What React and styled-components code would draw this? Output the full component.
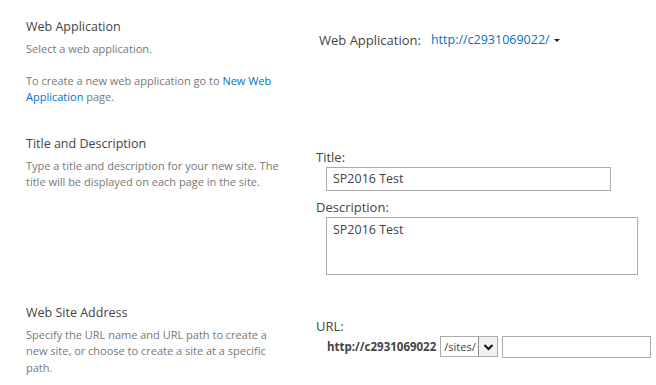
import React from 'react';
import styled, { createGlobalStyle } from 'styled-components';

const $text = '#444444';
const $muted = '#777777';
const $link = '#0072c6';
const $border = '#ababab';

const GlobalStyle = createGlobalStyle`
  html, body {
    margin: 0;
    padding: 0;
    background: #ffffff;
  }
  body {
    font-family: 'Open Sans', 'Noto Sans', sans-serif;
    color: ${$text};
  }
`;

const Page = styled.div`
  padding-top: 18px;
  width: 656px;
`;

const Section = styled.section`
  display: grid;
  grid-template-columns: 316px 1fr;
  margin-bottom: 29px;

  &:last-child {
    margin-bottom: 0;
  }
`;

const Left = styled.div`
  padding-left: 26px;
`;

const Right = styled.div`
  padding-top: 13px;
  display: flex;
  flex-direction: column;
`;

const Heading = styled.h3`
  margin: 0 0 5px;
  font-size: 12.5px;
  line-height: 18px;
  font-weight: 400;
  color: ${$text};
`;

const Desc = styled.p`
  margin: 0;
  max-width: 260px;
  font-size: 11px;
  line-height: 16.5px;
  color: ${$muted};

  & + & {
    margin-top: 15px;
  }
`;

const Link = styled.a`
  color: ${$link};
  text-decoration: none;
`;

const InlineRow = styled.div`
  display: flex;
  align-items: center;
  gap: 10px;
  padding-left: ${(p) => p.$indent || 0}px;
  font-size: 13px;
  line-height: 18px;
`;

const AppPicker = styled.span`
  display: inline-flex;
  align-items: center;
  gap: 4px;
  font-size: 12.5px;
  color: ${$link};
`;

const Caret = styled.span`
  width: 0;
  height: 0;
  border-left: 3px solid transparent;
  border-right: 3px solid transparent;
  border-top: 3px solid #222;
  margin-top: 1px;
`;

const Label = styled.div`
  font-size: 13px;
  line-height: 18px;
  color: ${$text};
  margin-bottom: 1px;
`;

const Field = styled.div`
  margin-left: 10px;
  box-sizing: border-box;
  width: ${(p) => p.$w}px;
  height: ${(p) => p.$h}px;
  border: 1px solid ${$border};
  padding: ${(p) => (p.$multi ? '3px 6px' : '0 6px')};
  display: flex;
  align-items: ${(p) => (p.$multi ? 'flex-start' : 'center')};
  font-size: 12.5px;
  color: ${$text};
  margin-bottom: ${(p) => p.$mb || 0}px;
`;

const UrlRow = styled.div`
  display: flex;
  align-items: center;
  gap: 4px;
  padding-left: 11px;
`;

const UrlPrefix = styled.span`
  font-size: 11.5px;
  font-weight: 700;
  color: ${$text};
`;

const Select = styled.div`
  display: flex;
  height: 21px;
  box-sizing: border-box;
  border: 1px solid ${$border};
  font-size: 11px;
`;

const SelectValue = styled.span`
  padding: 0 3px;
  display: flex;
  align-items: center;
  width: 31px;
  color: ${$text};
`;

const SelectButton = styled.span`
  width: 18px;
  border-left: 1px solid #8a8a8a;
  background: #f2f2f2;
  display: flex;
  align-items: center;
  justify-content: center;
`;

const TextBox = styled.div`
  box-sizing: border-box;
  width: 149px;
  height: 22px;
  border: 1px solid ${$border};
`;

const App = () => (
  <>
    <GlobalStyle />
    <Page>
      <Section>
        <Left>
          <Heading>Web Application</Heading>
          <Desc>Select a web application.</Desc>
          <Desc>
            To create a new web application go to <Link>New Web</Link> <Link>Application</Link> page.
          </Desc>
        </Left>
        <Right>
          <InlineRow $indent={3}>
            <span>Web Application:</span>
            <AppPicker>
              http://c2931069022/
              <Caret />
            </AppPicker>
          </InlineRow>
        </Right>
      </Section>

      <Section>
        <Left>
          <Heading>Title and Description</Heading>
          <Desc>
            Type a title and description for your new site. The title will be displayed on each
            page in the site.
          </Desc>
        </Left>
        <Right>
          <Label>Title:</Label>
          <Field $w={285} $h={24} $mb={7}>SP2016 Test</Field>
          <Label>Description:</Label>
          <Field $w={312} $h={58} $multi>SP2016 Test</Field>
        </Right>
      </Section>

      <Section>
        <Left>
          <Heading>Web Site Address</Heading>
          <Desc>
            Specify the URL name and URL path to create a new site, or choose to create a site at
            a specific path.
          </Desc>
        </Left>
        <Right>
          <Label>URL:</Label>
          <UrlRow>
            <UrlPrefix>http://c2931069022</UrlPrefix>
            <Select>
              <SelectValue>/sites/</SelectValue>
              <SelectButton>
                <svg width="11" height="8" viewBox="0 0 11 8">
                  <path d="M1.5 2 L5.5 6 L9.5 2" fill="none" stroke="#111" strokeWidth="2" />
                </svg>
              </SelectButton>
            </Select>
            <TextBox />
          </UrlRow>
        </Right>
      </Section>
    </Page>
  </>
);

export default App;
